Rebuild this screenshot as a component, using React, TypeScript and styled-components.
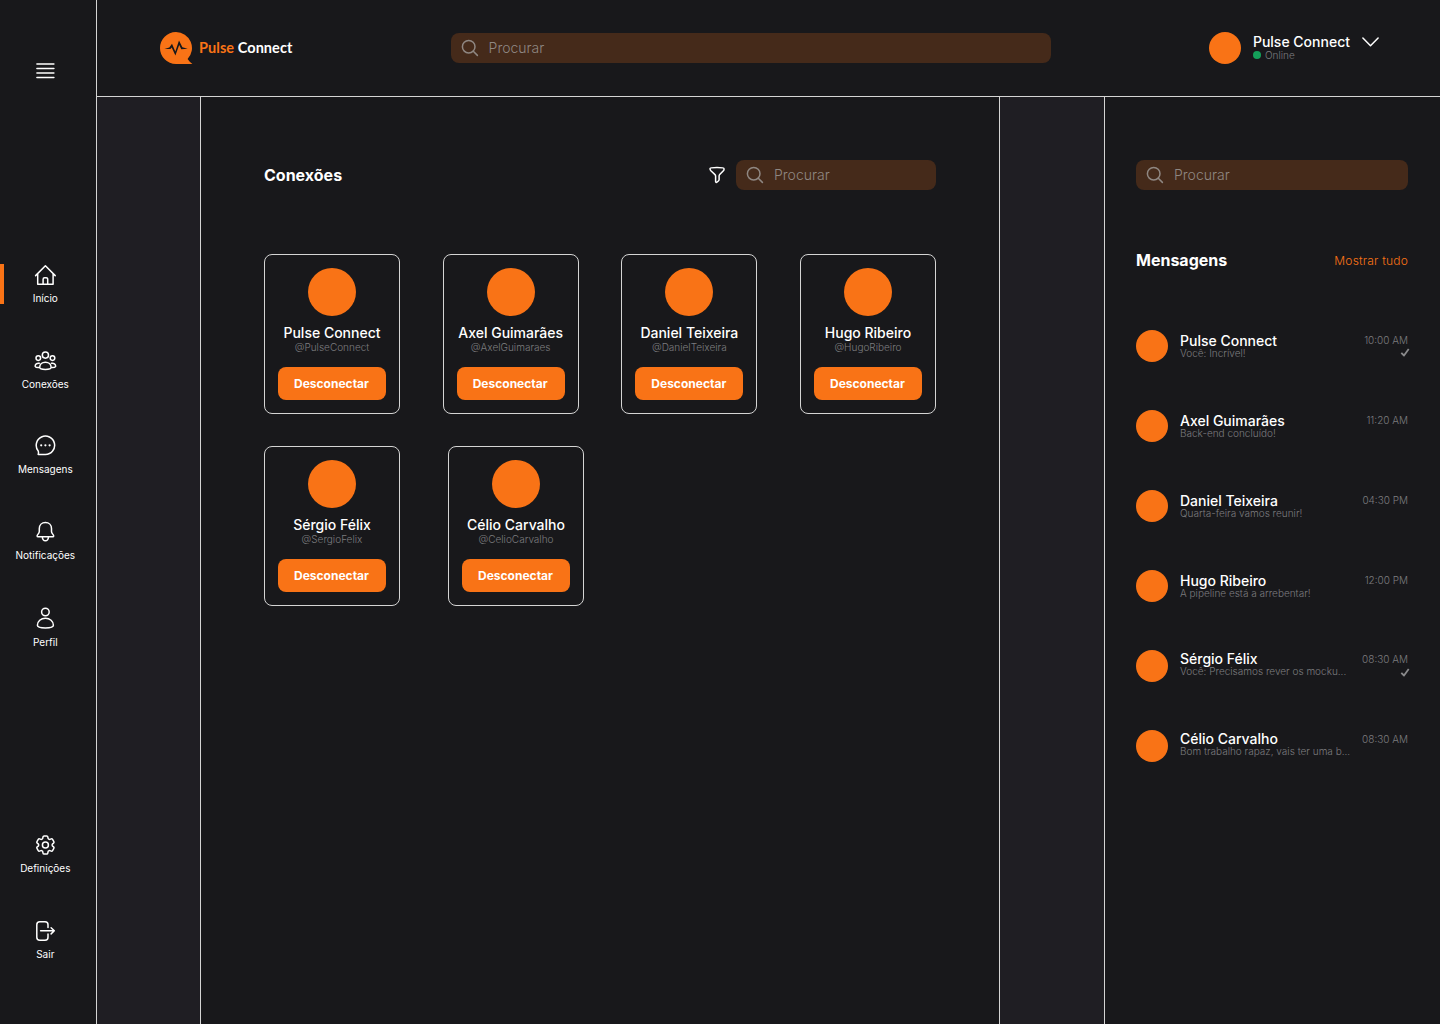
import React from "react";
import styled, { createGlobalStyle } from "styled-components";

const color = {
  surface: "#18181b",
  gutter: "#1f1e23",
  line: "#d4d4d4",
  accent: "#f97316",
  field: "#452a1a",
  muted: "#7c7c7f",
  placeholder: "#8f8782",
  text: "#ffffff",
};

const GlobalStyle = createGlobalStyle`
  *, *::before, *::after { box-sizing: border-box; }
  body { margin: 0; background: ${color.surface}; font-family: Inter, "Liberation Sans", sans-serif; color: ${color.text}; }
  button { font-family: inherit; border: 0; background: none; padding: 0; color: inherit; cursor: pointer; }
  h2 { margin: 0; padding: 0; }
  svg { display: block; flex: none; }
`;

const Shell = styled.div`
  display: flex;
  width: 1440px;
  height: 1024px;
  overflow: hidden;
  background: ${color.surface};
`;

const Sidebar = styled.nav`
  display: flex;
  flex-direction: column;
  width: 97px;
  flex: none;
  border-right: 1px solid ${color.line};
`;

const MenuButton = styled.button`
  display: flex;
  width: 90.6px;
  justify-content: center;
  margin-top: 60px;
  height: 22px;
`;

const NavGroup = styled.div<{ $top: number; $gap: number }>`
  display: flex;
  flex-direction: column;
  width: 90.6px;
  margin-top: ${(p) => p.$top}px;
  gap: ${(p) => p.$gap}px;
`;

const NavItem = styled.a<{ $active?: boolean }>`
  display: flex;
  flex-direction: column;
  align-items: center;
  gap: 6px;
  box-shadow: ${(p) => (p.$active ? `inset 4px 0 ${color.accent}` : "none")};
`;

const NavLabel = styled.span`
  font-size: 10px;
  line-height: 12px;
  white-space: nowrap;
`;

const Page = styled.div`
  display: flex;
  flex-direction: column;
  flex: 1;
  min-width: 0;
`;

const Header = styled.header`
  display: flex;
  align-items: center;
  height: 97px;
  flex: none;
  padding: 0 60px 0 63px;
  border-bottom: 1px solid ${color.line};
`;

const Brand = styled.div`
  display: flex;
  align-items: center;
  gap: 6px;
  width: 290.6px;
`;

const BrandName = styled.span`
  font-family: Lato, "Open Sans", sans-serif;
  font-weight: 700;
  font-size: 14.5px;
  line-height: 18px;
  letter-spacing: 0.06px;
  white-space: nowrap;
  em { font-style: normal; color: ${color.accent}; }
`;

const SearchField = styled.label<{ $width: number }>`
  display: flex;
  align-items: center;
  gap: 10px;
  width: ${(p) => p.$width}px;
  height: 30px;
  padding-left: 10px;
  border-radius: 8px;
  background: ${color.field};
  color: ${color.placeholder};
  font-size: 14px;
  font-weight: 300;
`;

const SearchText = styled.span`
  line-height: 18px;
`;

const Account = styled.div`
  display: flex;
  align-items: center;
  margin-left: auto;
`;

const Avatar = styled.span<{ $size: number }>`
  width: ${(p) => p.$size}px;
  height: ${(p) => p.$size}px;
  flex: none;
  border-radius: 50%;
  background: ${color.accent};
`;

const AccountInfo = styled.div`
  display: flex;
  flex-direction: column;
  margin: 0 12px 2px;
`;

const AccountToggle = styled.button`
  margin-bottom: 12px;
`;

const Name = styled.span`
  font-size: 14px;
  font-weight: 500;
  line-height: 16px;
  white-space: nowrap;
`;

const Small = styled.span`
  font-size: 10px;
  font-weight: 300;
  line-height: 10px;
  color: ${color.muted};
  white-space: nowrap;
`;

const Status = styled(Small)`
  display: flex;
  align-items: center;
  gap: 4px;
  &::before {
    content: "";
    width: 8px;
    height: 8px;
    border-radius: 50%;
    background: #14a05a;
  }
`;

const Columns = styled.div`
  display: flex;
  flex: 1;
  justify-content: space-between;
  background: ${color.gutter};
`;

const Connections = styled.main`
  width: 800px;
  margin-left: 103px;
  padding: 63px 63px 0;
  border: 1px solid ${color.line};
  border-width: 0 1px;
  background: ${color.surface};
`;

const Toolbar = styled.div`
  display: flex;
  align-items: center;
  height: 30px;
  margin-bottom: 64px;
`;

const Title = styled.h2`
  flex: 1;
  font-size: 16px;
  font-weight: 700;
  line-height: 20px;
`;

const FilterButton = styled.button`
  display: flex;
  margin-right: 10.4px;
`;

const CardRow = styled.div<{ $spread?: boolean }>`
  display: flex;
  justify-content: ${(p) => (p.$spread ? "space-between" : "flex-start")};
  gap: ${(p) => (p.$spread ? 0 : 48)}px;
  margin-bottom: 32px;
`;

const Card = styled.article`
  display: flex;
  flex-direction: column;
  align-items: center;
  width: 136px;
  height: 160px;
  padding: 13px;
  border: 1px solid ${color.line};
  border-radius: 8px;
`;

const CardName = styled(Name)`
  margin-top: 9px;
`;

const CardHandle = styled(Small)`
  margin-top: 1px;
`;

const DisconnectButton = styled.button`
  width: 108px;
  height: 33px;
  margin-top: auto;
  padding-right: 1px;
  border-radius: 8px;
  background: ${color.accent};
  font-size: 12px;
  font-weight: 700;
`;

const Messages = styled.aside`
  width: 336px;
  padding: 63px 32px 0 31px;
  border-left: 1px solid ${color.line};
  background: ${color.surface};
`;

const MessagesHead = styled.div`
  display: flex;
  align-items: center;
  height: 20px;
  margin: 60px 0;
`;

const ShowAll = styled.a`
  color: ${color.accent};
  font-size: 12px;
  font-weight: 300;
  letter-spacing: 0.2px;
`;

const MessageList = styled.div`
  display: flex;
  flex-direction: column;
  gap: 48px;
`;

const MessageRow = styled.div`
  display: flex;
  height: 32px;
`;

const MessageText = styled.div<{ $raised?: boolean }>`
  display: flex;
  flex-direction: column;
  flex: 1;
  margin-left: 12px;
  padding-top: ${(p) => (p.$raised ? 1 : 3)}px;
`;

const MessageSnippet = styled(Small)`
  margin-top: -1px;
`;

const MessageMeta = styled.div<{ $raised?: boolean }>`
  display: flex;
  flex-direction: column;
  align-items: flex-end;
  justify-content: space-between;
  height: 27px;
  padding-top: ${(p) => (p.$raised ? 4 : 5)}px;
`;

const MessageCheck = styled.span`
  margin-right: -2px;
`;

const stroke = {
  fill: "none",
  stroke: "currentColor",
  strokeWidth: 1.5,
  strokeLinecap: "round" as const,
  strokeLinejoin: "round" as const,
};

const NavIcon = ({ height = 22, children }: { height?: number; children: React.ReactNode }) => (
  <svg width="24" height={height} viewBox={`-0.4 0 24 ${height}`} {...stroke}>
    {children}
  </svg>
);

const HomeIcon = () => (
  <NavIcon>
    <path d="M2.2 11.6 12 1.8l9.8 9.8M4.3 9.8v10.5h15.4V9.8M9.7 20.3v-5.1a1.5 1.5 0 0 1 1.5-1.5h1.6a1.5 1.5 0 0 1 1.5 1.5v5.1" />
  </NavIcon>
);

const PeopleIcon = () => (
  <NavIcon>
    <circle cx="12" cy="5.1" r="3.1" />
    <circle cx="4.9" cy="8.1" r="2.3" />
    <circle cx="19.1" cy="8.1" r="2.3" />
    <path d="M6.3 17.2c0-3 2.5-5 5.7-5s5.7 2 5.7 5c0 1.3-2.7 2.2-5.7 2.2s-5.7-.9-5.7-2.2zM5.9 13.2c-2.5-.4-4.1 1-4.2 3 .4 1 2.2 1.5 4 1.4M18.1 13.2c2.5-.4 4.1 1 4.2 3-.4 1-2.2 1.5-4 1.4" />
  </NavIcon>
);

const ChatIcon = () => (
  <NavIcon>
    <path d="M12 19.5a9.2 9.2 0 1 0-7.2-3.5c.5 1.2.4 2.2 0 3.4h7.2z" />
    <g fill="currentColor" stroke="none">
      <circle cx="7.8" cy="10.3" r="1.1" />
      <circle cx="12" cy="10.3" r="1.1" />
      <circle cx="16.2" cy="10.3" r="1.1" />
    </g>
  </NavIcon>
);

const BellIcon = () => (
  <NavIcon>
    <path d="M12 1.6C8.4 1.6 5.9 4.2 5.9 7.6v3c0 1.9-2.2 3-2.2 4.4 0 .5.4.8 1 .8h14.6c.6 0 1-.3 1-.8 0-1.4-2.2-2.5-2.2-4.4v-3c0-3.4-2.5-6-6.1-6zM8.9 16c.2 2.4 1.3 3.8 3.1 3.8s2.9-1.4 3.1-3.8" />
  </NavIcon>
);

const PersonIcon = () => (
  <NavIcon height={24}>
    <circle cx="12" cy="6" r="3.8" />
    <path d="M4 19.3c0-4 3.5-7 8-7s8 3 8 7c0 1.5-3.6 2.6-8 2.6s-8-1.1-8-2.6z" />
  </NavIcon>
);

const GearIcon = () => (
  <NavIcon>
    <g transform="translate(0 -1)">
      <path d="M9.594 3.94c.09-.542.56-.94 1.11-.94h2.593c.55 0 1.02.398 1.11.94l.213 1.281c.063.374.313.686.645.87.074.04.147.083.22.127.325.196.72.257 1.075.124l1.217-.456a1.125 1.125 0 0 1 1.37.49l1.296 2.247a1.125 1.125 0 0 1-.26 1.431l-1.003.827c-.293.241-.438.613-.43.992a7.723 7.723 0 0 1 0 .255c-.008.378.137.75.43.991l1.004.827c.424.35.534.955.26 1.43l-1.298 2.247a1.125 1.125 0 0 1-1.369.491l-1.217-.456c-.355-.133-.75-.072-1.076.124a6.47 6.47 0 0 1-.22.128c-.331.183-.581.495-.644.869l-.213 1.281c-.09.543-.56.94-1.11.94h-2.594c-.55 0-1.019-.398-1.11-.94l-.213-1.281c-.062-.374-.312-.686-.644-.87a6.52 6.52 0 0 1-.22-.127c-.325-.196-.72-.257-1.076-.124l-1.217.456a1.125 1.125 0 0 1-1.369-.49l-1.297-2.247a1.125 1.125 0 0 1 .26-1.431l1.004-.827c.292-.24.437-.613.43-.991a6.932 6.932 0 0 1 0-.255c.007-.38-.138-.751-.43-.992l-1.004-.827a1.125 1.125 0 0 1-.26-1.43l1.297-2.247a1.125 1.125 0 0 1 1.37-.491l1.216.456c.356.133.751.072 1.076-.124.072-.044.146-.086.22-.128.332-.183.582-.495.644-.869l.214-1.28Z" />
      <circle cx="12" cy="12" r="3" />
    </g>
  </NavIcon>
);

const ExitIcon = () => (
  <NavIcon>
    <path d="M14.6 7.4V4.8a3 3 0 0 0-3-3H6.4a3 3 0 0 0-3 3v12.4a3 3 0 0 0 3 3h5.2a3 3 0 0 0 3-3V14M7.2 10.8h13.6M17.7 7.7l3.2 3.1-3.2 3.1" />
  </NavIcon>
);

const MenuIcon = () => (
  <svg width="20" height="22" viewBox="-0.4 0 20 22" {...stroke}>
    <path d="M1.5 4h17M1.5 8.5h17M1.5 13h17M1.5 17.5h17" />
  </svg>
);

const SearchIcon = () => (
  <svg width="18" height="18" viewBox="0 0 18 18" {...stroke}>
    <circle cx="7.7" cy="7.7" r="6.3" />
    <path d="m12.3 12.3 4.1 4.1" />
  </svg>
);

const FilterIcon = () => (
  <svg width="18" height="18" viewBox="0 0 18 18" {...stroke}>
    <path d="M2 2.5C2 2 5 1.6 9 1.6s7 .4 7 1.1v.7c0 .6-.2 1-.6 1.4L11.7 8.6c-.4.4-.6.9-.6 1.5v3.7c0 .4-.2.7-.5.9l-1.7 1.5c-.6.4-1.3 0-1.3-.7v-5.4c0-.6-.2-1.1-.6-1.500L2.900 4.800c-.5-.5-.9-1.200-.9-2.300z" />
  </svg>
);

const ChevronIcon = () => (
  <svg width="18" height="12" viewBox="0 0 18 12" {...stroke}>
    <path d="M.9 2 8.5 9.7 16.1 2" />
  </svg>
);

const CheckIcon = () => (
  <svg width="10" height="9" viewBox="0 0 10 9" fill="none" stroke="#8a8a8c" strokeWidth="1.8" strokeLinejoin="round">
    <path d="M1.3 4.8 4 7.5 8.7 1" />
  </svg>
);

const LogoMark = () => (
  <svg width="33" height="32" viewBox="0 0 33 32">
    <path fill={color.accent} d="M16 0a16 16 0 0 1 11.6 27c1.3 2 2.9 3.6 4.8 5H16A16 16 0 0 1 16 0z" />
    <path fill={color.surface} d="m4.5 16.9 4.8-1.4 2.7-3.7 3.3 7.8L19 8.6l3.4 6.6 5.3 1.5-6.4.5-2.1-4.2-3.8 10.6-3.7-8.2-1.3 1.7z" />
  </svg>
);

const Search = ({ width }: { width: number }) => (
  <SearchField $width={width}>
    <SearchIcon />
    <SearchText>Procurar</SearchText>
  </SearchField>
);

const people = [
  { name: "Pulse Connect", handle: "@PulseConnect" },
  { name: "Axel Guimarães", handle: "@AxelGuimaraes" },
  { name: "Daniel Teixeira", handle: "@DanielTeixeira" },
  { name: "Hugo Ribeiro", handle: "@HugoRibeiro" },
  { name: "Sérgio Félix", handle: "@SergioFelix" },
  { name: "Célio Carvalho", handle: "@CelioCarvalho" },
];

const messages = [
  { name: "Pulse Connect", text: "Você: Incrível!", time: "10:00 AM", read: true },
  { name: "Axel Guimarães", text: "Back-end concluído!", time: "11:20 AM" },
  { name: "Daniel Teixeira", text: "Quarta-feira vamos reunir!", time: "04:30 PM" },
  { name: "Hugo Ribeiro", text: "A pipeline está a arrebentar!", time: "12:00 PM" },
  { name: "Sérgio Félix", text: "Você: Precisamos rever os mocku...", time: "08:30 AM", read: true, raised: true },
  { name: "Célio Carvalho", text: "Bom trabalho rapaz, vais ter uma b...", time: "08:30 AM", raised: true },
];

const PersonCard = ({ name, handle }: { name: string; handle: string }) => (
  <Card>
    <Avatar $size={48} />
    <CardName>{name}</CardName>
    <CardHandle>{handle}</CardHandle>
    <DisconnectButton>Desconectar</DisconnectButton>
  </Card>
);

const mainNav = [
  { label: "Início", Icon: HomeIcon, active: true },
  { label: "Conexões", Icon: PeopleIcon },
  { label: "Mensagens", Icon: ChatIcon },
  { label: "Notificações", Icon: BellIcon },
  { label: "Perfil", Icon: PersonIcon },
];

const footerNav = [
  { label: "Definições", Icon: GearIcon },
  { label: "Sair", Icon: ExitIcon },
];

export default function App() {
  return (
    <>
      <GlobalStyle />
      <Shell>
        <Sidebar>
          <MenuButton aria-label="Menu">
            <MenuIcon />
          </MenuButton>
          <NavGroup $top={182} $gap={45.5}>
            {mainNav.map(({ label, Icon, active }) => (
              <NavItem key={label} $active={active}>
                <Icon />
                <NavLabel>{label}</NavLabel>
              </NavItem>
            ))}
          </NavGroup>
          <NavGroup $top={186} $gap={46}>
            {footerNav.map(({ label, Icon }) => (
              <NavItem key={label}>
                <Icon />
                <NavLabel>{label}</NavLabel>
              </NavItem>
            ))}
          </NavGroup>
        </Sidebar>
        <Page>
          <Header>
            <Brand>
              <LogoMark />
              <BrandName>
                <em>Pulse</em> Connect
              </BrandName>
            </Brand>
            <Search width={600} />
            <Account>
              <Avatar $size={32} />
              <AccountInfo>
                <Name>Pulse Connect</Name>
                <Status>Online</Status>
              </AccountInfo>
              <AccountToggle aria-label="Conta">
                <ChevronIcon />
              </AccountToggle>
            </Account>
          </Header>
          <Columns>
            <Connections>
              <Toolbar>
                <Title>Conexões</Title>
                <FilterButton aria-label="Filtrar">
                  <FilterIcon />
                </FilterButton>
                <Search width={200} />
              </Toolbar>
              <CardRow $spread>
                {people.slice(0, 4).map((p) => (
                  <PersonCard key={p.handle} {...p} />
                ))}
              </CardRow>
              <CardRow>
                {people.slice(4).map((p) => (
                  <PersonCard key={p.handle} {...p} />
                ))}
              </CardRow>
            </Connections>
            <Messages>
              <Search width={272} />
              <MessagesHead>
                <Title>Mensagens</Title>
                <ShowAll>Mostrar tudo</ShowAll>
              </MessagesHead>
              <MessageList>
                {messages.map((m) => (
                  <MessageRow key={m.name}>
                    <Avatar $size={32} />
                    <MessageText $raised={m.raised}>
                      <Name>{m.name}</Name>
                      <MessageSnippet>{m.text}</MessageSnippet>
                    </MessageText>
                    <MessageMeta $raised={m.raised}>
                      <Small>{m.time}</Small>
                      {m.read && (
                        <MessageCheck>
                          <CheckIcon />
                        </MessageCheck>
                      )}
                    </MessageMeta>
                  </MessageRow>
                ))}
              </MessageList>
            </Messages>
          </Columns>
        </Page>
      </Shell>
    </>
  );
}
